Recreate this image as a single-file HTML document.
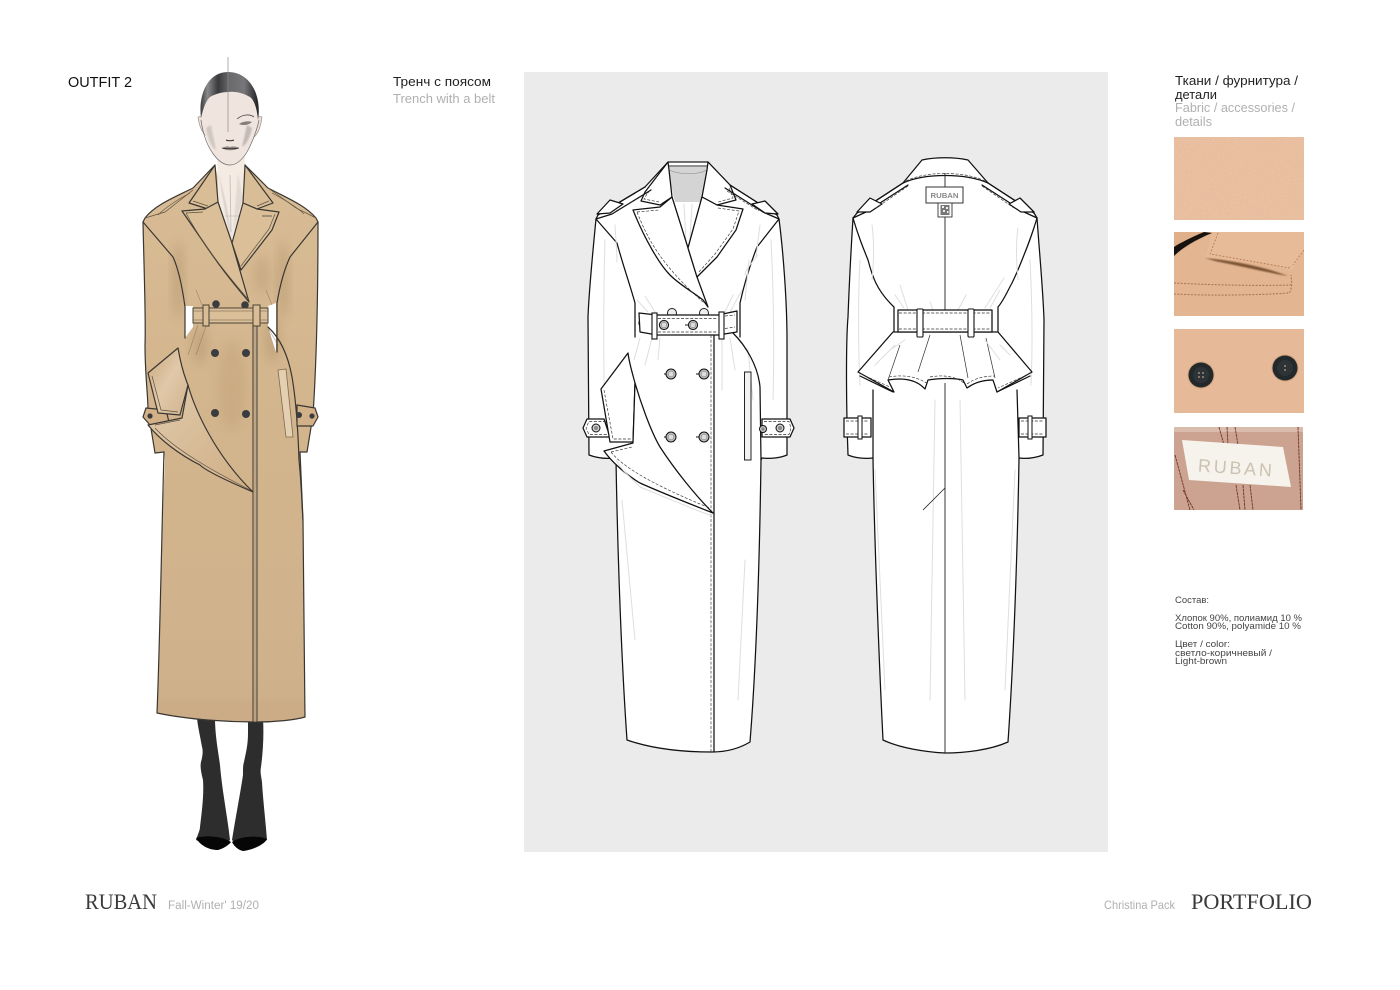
<!DOCTYPE html>
<html lang="ru"><head><meta charset="utf-8"><title>Outfit 2</title>
<style>
html,body{margin:0;padding:0;background:#fff;width:1400px;height:990px;overflow:hidden}
svg{display:block}
text{font-family:"Liberation Sans","Noto Sans CJK SC",sans-serif}
.serif{font-family:"Liberation Serif",serif}
.k{fill:none;stroke:#111;stroke-width:1.25;stroke-linejoin:round;stroke-linecap:round}
.w{fill:#fff}
.t{fill:none;stroke:#333;stroke-width:.65;stroke-dasharray:3 1.6}
.f{fill:none;stroke:#dedede;stroke-width:1;stroke-linecap:round}
.c{fill:none;stroke:#3a3732;stroke-width:1.2;stroke-linejoin:round;stroke-linecap:round}
.d{fill:none;stroke:#5e5140;stroke-width:.7}
</style></head><body>
<svg width="1400" height="990" viewBox="0 0 1400 990" xmlns="http://www.w3.org/2000/svg">
<defs>
<linearGradient id="coat" x1="0" y1="0" x2="0" y2="1"><stop offset="0" stop-color="#d8bc95"/><stop offset=".45" stop-color="#d3b58d"/><stop offset="1" stop-color="#ceb08b"/></linearGradient>
<linearGradient id="flap" x1="0" y1="0" x2="1" y2="1"><stop offset="0" stop-color="#c9a77d"/><stop offset=".5" stop-color="#e0c8a8"/><stop offset="1" stop-color="#d2b390"/></linearGradient>
<linearGradient id="flap2" x1="0" y1="0" x2="1" y2="1"><stop offset="0" stop-color="#e0caab"/><stop offset="1" stop-color="#cfae85"/></linearGradient>
<linearGradient id="hair" x1="0" y1="0" x2="1" y2="0"><stop offset="0" stop-color="#3a3a3c"/><stop offset=".12" stop-color="#8a8a8d"/><stop offset=".3" stop-color="#3a3a3c"/><stop offset=".5" stop-color="#6a6a6d"/><stop offset=".75" stop-color="#77777b"/><stop offset="1" stop-color="#1e1e20"/></linearGradient>
<filter id="b2" x="-30%" y="-30%" width="160%" height="160%"><feGaussianBlur stdDeviation="2"/></filter>
<filter id="b5" x="-50%" y="-50%" width="200%" height="200%"><feGaussianBlur stdDeviation="5"/></filter>
<filter id="b1" x="-30%" y="-30%" width="160%" height="160%"><feGaussianBlur stdDeviation=".8"/></filter>
<filter id="grain" x="0" y="0" width="100%" height="100%"><feTurbulence type="fractalNoise" baseFrequency=".7" numOctaves="2" seed="4"/><feColorMatrix values="0 0 0 0 .6  0 0 0 0 .4  0 0 0 0 .28  0 0 0 .6 -.2"/></filter>
<clipPath id="s2"><rect x="1174" y="232" width="130" height="84"/></clipPath>
<clipPath id="s4"><rect x="1174" y="427" width="129" height="83"/></clipPath>
<clipPath id="coatclip"><path d="M215,165 L193,188 C175,197 155,205 145,218 L143,222 C144,270 146,320 145,345 C145,375 148,395 148,410 L155,453 L164,452 L165,460 C162,520 160,640 157,713 C190,720 230,722 257,722 C275,722 295,720 305,717 C304,640 304,560 303,520 L300,452 L307,452 L313,415 C316,370 318,300 318,222 L316,218 C305,205 285,197 268,188 L245,165 L232,243 Z"/></clipPath>
</defs>
<rect width="1400" height="990" fill="#fff"/>
<rect x="524" y="72" width="584" height="780" fill="#ebebeb"/>

<!-- ILLUSTRATION: legs -->
<path d="M197,718 L215,718 C215,735 218,750 220,765 C222,790 228,820 230,840 L218,850 L196,840 C198,834 200,830 200,827 C202,810 204,795 203,780 C201,772 200,766 201,762 C203,755 203,750 202,747 C200,735 198,728 197,718 Z" fill="#2d2d2e"/>
<path d="M248,718 L263,718 C264,735 263,752 261,767 C260,772 261,775 262,782 C263,800 266,825 267,840 L243,851 L232,840 C236,815 240,795 243,775 C243,768 243,765 244,762 C246,752 248,745 248,733 Z" fill="#2d2d2e"/>
<path d="M196,838 C205,835 222,836 231,842 C228,846 222,849 218,850 C208,850 200,845 196,838 Z" fill="#060606"/>
<path d="M232,842 C240,836 258,835 267,839 C264,845 252,850 243,851 C238,850 234,846 232,842 Z" fill="#060606"/>

<!-- ILLUSTRATION: coat -->
<path d="M215,165 L193,188 C175,197 155,205 145,218 L143,222 C144,270 146,320 145,345 C145,375 148,395 148,410 L155,453 L164,452 L165,460 C162,520 160,640 157,713 C190,720 230,722 257,722 C275,722 295,720 305,717 C304,640 304,560 303,520 L300,452 L307,452 L313,415 C316,370 318,300 318,222 L316,218 C305,205 285,197 268,188 L245,165 L232,243 Z" fill="url(#coat)"/>
<g clip-path="url(#coatclip)">
<ellipse cx="178" cy="280" rx="5" ry="38" fill="#a5855f" opacity=".4" filter="url(#b5)"/>
<ellipse cx="283" cy="280" rx="5" ry="38" fill="#a5855f" opacity=".4" filter="url(#b5)"/>
<ellipse cx="232" cy="385" rx="14" ry="45" fill="#bd9a70" opacity=".35" filter="url(#b5)"/>
<ellipse cx="272" cy="340" rx="8" ry="22" fill="#a98a64" opacity=".35" filter="url(#b5)"/>
<ellipse cx="200" cy="345" rx="8" ry="20" fill="#a98a64" opacity=".35" filter="url(#b5)"/>
<rect x="0" y="700" width="400" height="30" fill="#b8996f" opacity=".15" filter="url(#b2)"/>
<ellipse cx="262" cy="275" rx="8" ry="18" fill="#a58760" opacity=".25" filter="url(#b5)"/>
</g>
<!-- gaps at waist -->
<path d="M185,306 L193,306 L193,327 L185,338 Z" fill="#fff"/>
<path d="M268,306 L276,303 L276,352 C272,340 270,333 268,327 Z" fill="#fff"/>

<!-- neck and head -->
<path d="M217,150 L245,150 L245,167 L243,203 L232,243 L218,202 Z" fill="#f4ebe3"/>
<path d="M218,170 L228,225 L232,240 L226,205 Z" fill="#9f9894" opacity=".45" filter="url(#b1)"/>
<path d="M238,172 L233,232 L243,200 Z" fill="#bbb1a7" opacity=".3" filter="url(#b1)"/>
<path d="M230,175 L231,232" stroke="#bbb" stroke-width=".8" fill="none"/>
<path d="M225,216 H240" stroke="#b8ae9f" stroke-width=".5"/>
<path d="M198,117 C199,126 203,135 208,137 L208,115 Z" fill="#ebddd5" stroke="#8a8380" stroke-width=".6"/>
<path d="M262,117 C261,126 258,134 254,137 L254,115 Z" fill="#ebddd5" stroke="#8a8380" stroke-width=".6"/>
<path d="M201,117 C203,130 208,145 214,155 C220,163 226,165 230,165 C236,165 242,160 247,152 C252,143 257,130 259,117 C259,100 250,85 240,80 L220,80 C208,85 203,100 201,117 Z" fill="#efe5de"/>
<path d="M206,128 C208,140 212,148 216,150 L211,125 Z" fill="#9b9491" opacity=".35" filter="url(#b1)"/>
<path d="M252,128 C250,138 246,145 242,147 L247,125 Z" fill="#99908c" opacity=".5" filter="url(#b1)"/>
<path d="M201,120 C203,135 208,147 214,155 C220,163 226,165 230,165 C236,165 242,160 247,152 C252,143 257,130 259,120" fill="none" stroke="#6f6a68" stroke-width=".7"/>
<path d="M201,118 C198,94 208,72 228,72 C250,72 262,95 258,120 C257,108 254,100 250,97 C243,93 235,91 228,92 C222,92 215,94 210,97 C205,102 203,110 201,118 Z" fill="url(#hair)"/>
<path d="M228,57 V132" stroke="#8a8a8a" stroke-width=".7"/>
<path d="M237,119 C243,114 250,114 254,117" fill="none" stroke="#4c4543" stroke-width=".8"/>
<path d="M239,124 C243,121 249,121 252,122 C249,125 243,126 239,124 Z" fill="#857d7b"/>
<path d="M226,140 C228,141 232,141 234,140" fill="none" stroke="#3a3331" stroke-width="1"/>
<path d="M222,148 C226,146 228,146 230,147 C233,146 235,146 239,148 C235,151 226,151 222,148 Z" fill="#938986"/>
<path d="M222,148 C226,149 234,149 239,148" fill="none" stroke="#2c2624" stroke-width=".7"/>

<!-- coat lines -->
<path d="M215,165 L193,188 C175,197 155,205 145,218 L143,222 C144,270 146,320 145,345 C145,375 148,395 148,410 L155,453 L164,452" class="c"/>
<path d="M164,452 C162,520 160,640 157,713 C190,720 230,722 257,722 C275,722 295,720 305,717 C304,640 304,560 303,520 L300,452" class="c"/>
<path d="M245,165 L268,188 C285,197 305,205 316,218 L318,222 C318,300 316,370 313,415 L307,452 L300,452" class="c"/>
<path d="M143,222 L173,257 C178,268 182,285 185,307 V338" class="c"/>
<path d="M318,222 L290,257 C284,270 280,285 277,303 V352" class="c"/>
<path d="M268,327 C280,338 288,355 292,377 C296,400 298,430 299,460 C302,490 302,510 303,520" class="c"/>
<path d="M193,190 L165,212 L145,218 M268,188 L296,208 L316,218" class="d"/>
<path d="M190,193 C175,201 165,208 158,215 M272,193 C285,200 297,207 304,214" class="d"/>
<!-- collar -->
<path d="M215,165 L189,203 L208,209 L218,202 L215,165 Z" style="fill:#d9bd96" class="c"/>
<path d="M245,165 L273,203 L257,209 L243,203 Z" style="fill:#d9bd96" class="c"/>
<path d="M193,201 L208,206" class="d"/>
<path d="M269,201 L257,206" class="d"/>
<!-- lapels -->
<path d="M182,211 L205,209 L218,202 L232,243 L249,302 C235,285 222,270 202,240 Z" style="fill:#dabf99" class="c"/>
<path d="M186,213 L203,212 M186,213 C195,230 210,255 247,298" class="d"/>
<path d="M243,203 L257,209 L279,212 L272,230 L241,270 L232,243 Z" style="fill:#dabf99" class="c"/>
<path d="M275,214 L269,229 L241,266" class="d"/>
<path d="M262,216 H272" stroke="#333" stroke-width=".7"/>
<!-- center -->
<path d="M253,323 V722 M257,323 V722" stroke="#4a4540" stroke-width="1.1" fill="none"/>
<path d="M255,323 V722" stroke="#a89679" stroke-width="1"/>
<!-- gathers -->
<path d="M198,325 L188,355 M206,326 L196,355 M268,328 L278,345 M272,305 L266,290 M202,305 L196,290" stroke="#7a6548" stroke-width=".6" opacity=".6" fill="none"/>
<!-- buttons -->
<g fill="#3a3c40">
<circle cx="216" cy="304" r="3.8"/><circle cx="245" cy="305" r="3.8"/>
<circle cx="215" cy="353" r="4"/><circle cx="246" cy="353" r="4"/>
<circle cx="215" cy="413" r="4"/><circle cx="246" cy="414" r="4"/>
</g>
<!-- belt -->
<rect x="193" y="308" width="75" height="15" fill="#dabf99" stroke="#4a4337" stroke-width="1"/>
<path d="M193,311 H268 M193,320 H268" stroke="#6b5d48" stroke-width=".5"/>
<rect x="203" y="305" width="6" height="21" fill="#d9bd95" stroke="#4a4337" stroke-width="1"/>
<rect x="253" y="305" width="7" height="21" fill="#d9bd95" stroke="#4a4337" stroke-width="1"/>
<!-- cuffs -->
<path d="M143,417 L146,408 L166,410 L170,426 L150,425 Z" style="fill:#d2b188" class="c"/>
<circle cx="150" cy="416" r="2.6" fill="#3a3c40"/>
<path d="M318,417 L315,408 L297,405 L297,426 L313,426 Z" style="fill:#d2b188" class="c"/>
<circle cx="299" cy="415" r="3" fill="#3a3c40"/><circle cx="312" cy="416" r="2.6" fill="#3a3c40"/>
<!-- pocket -->
<path d="M278,370 L286,369 L293,437 L286,437 Z" fill="#e4cfb0" stroke="#7b6b53" stroke-width=".8"/>
<!-- flap -->
<path d="M178,348 L148,373 L158,413 L180,415 L188,385 C183,373 180,360 178,348 Z" style="fill:url(#flap)" class="c"/>
<path d="M152,376 L161,410 L178,412" class="d"/>
<path d="M188,385 C195,410 215,455 253,492 C225,480 205,470 200,465 C180,455 160,440 148,425 L182,418 Z" style="fill:url(#flap2)" class="c"/>
<path d="M155,425 L180,420 M155,428 C175,450 215,472 250,490" class="d"/>

<!-- FRONT SKETCH -->
<path d="M668,162 L645,187 L598,215 L596,219 C592,260 589,290 588,317 L589,455 C597,458 606,459 615,458 L616,460 C617,520 620,640 627,740 C650,748 680,752 712,752 C727,752 740,748 750,742 C755,680 759,600 761,460 L762,458 C770,459 780,458 787,455 L787,340 C787,300 783,250 779,219 L777,215 L730,185 L708,162 Z" class="k w"/>
<!-- neck -->
<path d="M669,167 H707 C707,178 704,190 702,202 H675 C672,190 669,178 669,167 Z" fill="#d4d4d4"/>
<path d="M668,162 H708 M668,166 H708" stroke="#222" stroke-width=".9"/>
<path d="M669,170 C680,175 698,175 707,170" stroke="#888" fill="none" stroke-width=".6"/>
<path d="M684,204 L686,240 M692,204 L690,240" class="f"/>
<path d="M672,197 L688,248 L702,197" class="k"/>
<!-- collar -->
<path d="M668,162 L645,192 L641,201 L660,205 L672,197 L669,170 Z" class="k w"/>
<path d="M708,162 L730,185 L736,200 L717,205 L702,197 L707,170 Z" class="k w"/>
<path d="M647,194 L644,199 L659,202 M729,188 L733,198 L718,202" class="t"/>
<!-- lapels -->
<path d="M633,210 L660,207 L672,197 L688,248 L697,277 L708,307 L703,300 C690,290 680,285 670,275 C660,265 645,240 633,210 Z" class="k w"/>
<path d="M637,212 L659,210 M637,212 C650,245 665,268 704,303" class="t"/>
<path d="M702,197 L717,205 L743,209 L736,230 L717,257 L697,277 L688,248 Z" class="k w"/>
<path d="M718,208 L739,211 L733,229 L715,254 L698,273" class="t"/>
<!-- shoulders -->
<path d="M645,187 L598,215 M651,190 L612,214 L596,219" class="k"/>
<path d="M610,200 L597,214 L610,213 L623,204 Z" class="k w"/>
<path d="M649,192 L616,211" class="t"/>
<path d="M730,185 L777,215 M725,188 L763,212 L779,219" class="k"/>
<path d="M765,201 L778,214 L765,213 L752,204 Z" class="k w"/>
<path d="M727,191 L759,211" class="t"/>
<!-- armholes -->
<path d="M596,219 L617,243 C622,262 630,285 635,303 V337" class="k"/>
<path d="M779,219 L757,247 C750,265 744,285 740,303 V337" class="k"/>
<path d="M615,225 C616,240 617,255 617,262 M760,225 C758,240 757,250 756,258 M605,240 C603,300 604,360 604,390 M771,240 C774,300 774,360 773,400 M749,260 L745,300 M758,255 C750,265 745,270 745,275" class="f"/>
<path d="M637,300 L648,312 M645,296 L655,312 M733,295 L725,312 M742,290 L730,312 M640,338 L634,360 M652,338 L645,365 M660,338 L658,360 M730,338 L735,370 M722,338 L722,390 M748,350 L753,400 M622,500 L635,640 M745,560 L738,700" class="f"/>
<!-- waist body -->
<path d="M733,333 C745,345 758,365 760,387 L761,460" class="k"/>
<path d="M714,335 V752" class="k"/>
<path d="M711,335 V752" class="t" stroke-width=".9"/>
<!-- buttons behind -->
<g fill="#eee" stroke="#222" stroke-width="1">
<circle cx="672" cy="313" r="4.5"/><circle cx="704" cy="313" r="4.5"/><circle cx="642" cy="323" r="3.2"/>
</g>
<!-- belt -->
<path d="M639,313 L657,315 H718 L737,311 V332 L718,335 H657 L640,332 Z" class="k w"/>
<path d="M658,318.5 H717 M658,332 H717 M725,316 L735,315 M725,328.5 L735,327" class="t"/>
<rect x="652" y="313" width="5" height="26" fill="#fff" stroke="#111" stroke-width="1.1"/>
<rect x="719" y="312" width="5" height="27" fill="#fff" stroke="#111" stroke-width="1.1"/>
<!-- buttons -->
<g>
<circle cx="664" cy="325" r="4.6" fill="#bbb" stroke="#111" stroke-width="1"/><circle cx="664" cy="325" r="2.6" fill="#ddd" stroke="#777" stroke-width=".5"/>
<circle cx="693" cy="325" r="4.6" fill="#bbb" stroke="#111" stroke-width="1"/><circle cx="693" cy="325" r="2.6" fill="#ddd" stroke="#777" stroke-width=".5"/>
<path d="M685,325 H688" stroke="#111"/>
<circle cx="671" cy="374" r="5" fill="#bbb" stroke="#111" stroke-width="1"/><circle cx="671" cy="374" r="2.8" fill="#ddd" stroke="#777" stroke-width=".5"/>
<circle cx="704" cy="374" r="5" fill="#bbb" stroke="#111" stroke-width="1"/><circle cx="704" cy="374" r="2.8" fill="#ddd" stroke="#777" stroke-width=".5"/>
<circle cx="671" cy="437" r="5" fill="#bbb" stroke="#111" stroke-width="1"/><circle cx="671" cy="437" r="2.8" fill="#ddd" stroke="#777" stroke-width=".5"/>
<circle cx="704" cy="437" r="5" fill="#bbb" stroke="#111" stroke-width="1"/><circle cx="704" cy="437" r="2.8" fill="#ddd" stroke="#777" stroke-width=".5"/>
<path d="M664,374 H666 M696,374 H699 M664,437 H666 M696,437 H699" stroke="#111"/>
</g>
<!-- pocket -->
<rect x="744.5" y="372" width="6.5" height="88" fill="#f2f2f2" stroke="#222" stroke-width="1"/>
<!-- cuffs -->
<path d="M604,419 L587,419 L583,428 L587,437 L610,437 Z" class="k w"/>
<path d="M606,421.5 L589,421.5 L586,428 L589,434.5 L608,434.5" class="t"/>
<circle cx="596" cy="428" r="4" fill="#ccc" stroke="#111"/><circle cx="596" cy="428" r="2" fill="#888"/>
<path d="M762,419 H790 L794,428 L790,437 H762 Z" class="k w"/>
<path d="M764,421.5 H789 L791,428 L789,434.5 H764" class="t"/>
<circle cx="763" cy="429" r="3.5" fill="#ccc" stroke="#111"/><circle cx="763" cy="429" r="1.7" fill="#888"/>
<circle cx="780" cy="428" r="4" fill="#ccc" stroke="#111"/><circle cx="780" cy="428" r="2" fill="#888"/>
<!-- flap -->
<path d="M628,353 L601,389 L610,442 L633,442 L635,383 C632,372 629,362 628,353 Z" class="k w"/>
<path d="M604,390 L613,439 L632,439" class="t"/>
<path d="M635,383 C640,400 650,430 660,447 C675,470 695,495 713,513 C685,502 660,492 640,483 C625,474 612,462 604,451 L633,443 Z" class="k w"/>
<path d="M611,452 L632,447 M611,452 C625,470 665,490 710,508" class="t"/>
<path d="M616,460 C625,475 632,478 640,487 C665,497 690,508 712,516" fill="none" stroke="#ddd" stroke-width="1"/>

<!-- BACK SKETCH -->
<path d="M903,183 L922,160 C935,157 955,157 968,160 L988,183 L1034,213 L1037,218 C1040,260 1043,290 1044,320 L1043,455 C1035,458 1027,459 1019,458 C1018,520 1015,640 1008,742 C990,750 965,753 945,753 C925,752 900,748 883,740 C878,640 874,520 873,458 C865,459 855,458 848,455 C846,400 846,340 848,317 C849,290 851,250 853,218 L857,213 Z" class="k w"/>
<path d="M903,183 C925,173 965,173 988,183" class="k" stroke-width="1"/>
<path d="M906,181 C925,171 965,171 985,181" class="t"/>
<path d="M945,173 V310 M945,383 V753" stroke="#222" stroke-width=".9" fill="none"/>
<rect x="926" y="187" width="37" height="16" fill="#fff" stroke="#333" stroke-width="1"/>
<text x="944.5" y="198" font-size="7.5" fill="#8a8a8a" text-anchor="middle" font-weight="bold" textLength="28" lengthAdjust="spacingAndGlyphs">RUBAN</text>
<rect x="938" y="203" width="14" height="14" fill="#fff" stroke="#333" stroke-width=".9"/>
<rect x="940.5" y="205" width="9" height="10" fill="#777"/>
<path d="M942,206 h2 v2 h-2z M946,207 h2 v2 h-2z M943,210 h2 v2 h-2z M947,211 h1.5 v2 h-1.5z" fill="#eee"/>
<!-- shoulders -->
<path d="M903,183 L857,213 M908,185 L866,212 L853,218" class="k"/>
<path d="M870,198 L857,212 L870,212 L882,204 Z" class="k w"/>
<path d="M908,186 L876,208" class="t"/>
<path d="M988,183 L1034,213 M982,185 L1024,212 L1037,218" class="k"/>
<path d="M1020,198 L1034,212 L1021,212 L1009,204 Z" class="k w"/>
<path d="M982,186 L1014,208" class="t"/>
<!-- armholes -->
<path d="M853,218 C858,235 862,245 868,260 C872,275 876,290 894,307 V332" class="k"/>
<path d="M1037,218 C1032,235 1028,245 1022,260 C1018,270 1016,275 1012,283 C1008,290 1004,300 998,307 V332" class="k"/>
<path d="M872,225 C874,240 874,260 872,280 M1018,228 C1016,240 1016,260 1018,280 M860,260 C858,300 858,340 860,385 M1030,260 C1032,300 1033,340 1031,385 M900,285 L908,310 M895,295 L904,308 M1004,278 L985,308 M1000,290 L990,308 M930,302 L933,310 M966,295 L958,310 M875,470 L885,690 M1015,470 L1005,690 M935,400 L930,700 M960,400 L965,700" class="f"/>
<!-- peplum -->
<path d="M893,332 L858,372 L894,392 L888,380 C900,378 915,378 925,389 L928,380 C940,378 955,378 963,380 L967,388 C975,382 985,380 993,380 L997,392 L1032,372 L998,332 Z" class="k w"/>
<path d="M861,374 L890,387 M1029,374 L998,388 M889,377 C900,375 915,375 928,384 M930,377 C940,375 955,375 965,384 M967,384 C975,378 985,376 995,376" class="t"/>
<path d="M860,376 L893,392 M1030,376 L997,392" class="k"/>
<path d="M900,345 L888,380 M930,335 L918,372 M960,335 L968,378 M986,338 L995,378" stroke="#333" stroke-width=".7" fill="none"/>
<path d="M905,340 L890,350 M1000,360 L985,340 M895,345 L875,365 M1010,355 L1000,345" class="f"/>
<path d="M873,390 V458 M1017,390 L1019,458" class="k"/>
<!-- belt -->
<rect x="898" y="310" width="94" height="22" class="k w"/>
<path d="M899,313 H991 M899,329 H991" class="t"/>
<rect x="917" y="309" width="6" height="28" rx="1" fill="#fff" stroke="#111" stroke-width="1.1"/>
<rect x="968" y="309" width="6" height="28" rx="1" fill="#fff" stroke="#111" stroke-width="1.1"/>
<path d="M923,510 L945,488" stroke="#222" stroke-width=".8"/>
<!-- back cuffs -->
<rect x="844" y="418" width="27" height="19" class="k w"/>
<path d="M846,421 H869 M846,434 H869" class="t"/>
<rect x="858" y="416" width="4" height="23" fill="#fff" stroke="#111"/>
<rect x="1019" y="418" width="27" height="19" class="k w"/>
<path d="M1021,421 H1044 M1021,434 H1044" class="t"/>
<rect x="1028" y="416" width="4" height="23" fill="#fff" stroke="#111"/>

<!-- SWATCHES -->
<rect x="1174" y="137" width="130" height="83" fill="#ecc1a2"/>
<rect x="1174" y="137" width="130" height="83" filter="url(#grain)"/>

<g clip-path="url(#s2)">
<rect x="1174" y="232" width="130" height="84" fill="#e3b590"/>
<path d="M1212,232 H1304 V250 L1292,270 C1270,263 1235,260 1206,258 Z" fill="#e8bb98"/>
<path d="M1174,258 C1182,250 1195,242 1212,233 L1206,232 H1174 Z" fill="#e0b08a"/>
<path d="M1174,256 C1182,248 1195,240 1212,233 L1204,232 C1192,237 1180,243 1174,247 Z" fill="#18120e"/>
<path d="M1205,258 C1235,261 1265,267 1288,276 C1270,273 1240,266 1215,261 Z" fill="#7a5233" filter="url(#b1)"/>
<path d="M1218,233 L1210,254 L1290,268 M1304,250 L1293,265" fill="none" stroke="#b37f57" stroke-width=".9" stroke-dasharray="2 1.5"/>
<path d="M1174,283 C1210,285 1260,286 1291,285 M1174,294 C1210,296 1260,295 1289,293 C1292,290 1292,283 1291,275" fill="none" stroke="#a57250" stroke-width="1" stroke-dasharray="2 1.4"/>
</g>

<rect x="1174" y="329" width="130" height="84" fill="#e6ba99"/>
<circle cx="1201" cy="375" r="13.5" fill="#cda07e"/>
<circle cx="1201" cy="375" r="12.5" fill="#23282b"/>
<circle cx="1201" cy="375" r="8" fill="#2d3336"/>
<circle cx="1199" cy="373" r=".9" fill="#b9a88a"/><circle cx="1203" cy="373" r=".9" fill="#b9a88a"/><circle cx="1199" cy="377" r=".9" fill="#b9a88a"/><circle cx="1203" cy="377" r=".9" fill="#b9a88a"/>
<circle cx="1285" cy="368" r="13.5" fill="#cda07e"/>
<circle cx="1285" cy="368" r="12.5" fill="#23282b"/>
<circle cx="1285" cy="368" r="8" fill="#2d3336"/>
<circle cx="1285" cy="366" r=".9" fill="#b9a88a"/><circle cx="1285" cy="370" r=".9" fill="#b9a88a"/>

<g clip-path="url(#s4)">
<rect x="1174" y="427" width="129" height="83" fill="#cba390"/>
<rect x="1174" y="427" width="129" height="5" fill="#d9bcab"/>
<path d="M1219,427 L1224,445 M1227,427 L1228,445 M1235,427 L1238,445 M1298,427 L1301,510 M1175,455 L1190,510 M1183,490 L1194,510 M1236,485 L1240,510 M1243,485 L1245,510 M1250,485 L1253,510" stroke="#70352b" stroke-width=".9" fill="none" stroke-dasharray="3 .6"/>
<path d="M1182,440 L1283,447 L1291,487 L1189,480 Z" fill="#f6f3ec"/>
<text x="1235" y="474" font-size="18" fill="#cbc2b2" text-anchor="middle" textLength="74" lengthAdjust="spacing" transform="rotate(4 1235 468)">RUBAN</text>
</g>

<!-- TEXT -->
<text x="68" y="87" font-size="14.6" fill="#111" textLength="64" lengthAdjust="spacingAndGlyphs">OUTFIT 2</text>
<text x="393" y="86" font-size="13" fill="#222" textLength="98" lengthAdjust="spacingAndGlyphs">Тренч с поясом</text>
<text x="393" y="103" font-size="13" fill="#b0b0b0" textLength="102" lengthAdjust="spacingAndGlyphs">Trench with a belt</text>
<text x="1175" y="85" font-size="13" fill="#222" textLength="123" lengthAdjust="spacingAndGlyphs">Ткани / фурнитура /</text>
<text x="1175" y="99" font-size="13" fill="#222" textLength="42" lengthAdjust="spacingAndGlyphs">детали</text>
<text x="1175" y="112" font-size="13" fill="#b0b0b0" textLength="120" lengthAdjust="spacingAndGlyphs">Fabric / accessories /</text>
<text x="1175" y="126" font-size="13" fill="#b0b0b0" textLength="37" lengthAdjust="spacingAndGlyphs">details</text>
<text x="1175" y="603" font-size="9.5" fill="#444" textLength="34" lengthAdjust="spacingAndGlyphs">Состав:</text>
<text x="1175" y="621" font-size="9.5" fill="#444" textLength="127" lengthAdjust="spacingAndGlyphs">Хлопок 90%, полиамид 10 %</text>
<text x="1175" y="629" font-size="9.5" fill="#444" textLength="126" lengthAdjust="spacingAndGlyphs">Cotton 90%, polyamide 10 %</text>
<text x="1175" y="647" font-size="9.5" fill="#444" textLength="55" lengthAdjust="spacingAndGlyphs">Цвет / color:</text>
<text x="1175" y="656" font-size="9.5" fill="#444" textLength="97" lengthAdjust="spacingAndGlyphs">светло-коричневый  /</text>
<text x="1175" y="664" font-size="9.5" fill="#444" textLength="52" lengthAdjust="spacingAndGlyphs">Light-brown</text>

<text class="serif" x="85" y="909" font-size="22" fill="#3a3a3a" textLength="72" lengthAdjust="spacingAndGlyphs">RUBAN</text>
<text x="168" y="909" font-size="11.5" fill="#b0b0b0" textLength="91" lengthAdjust="spacingAndGlyphs">Fall-Winter' 19/20</text>
<text x="1104" y="909" font-size="12" fill="#b0b0b0" textLength="71" lengthAdjust="spacingAndGlyphs">Christina Pack</text>
<text class="serif" x="1191" y="909" font-size="22" fill="#3a3a3a" textLength="121" lengthAdjust="spacingAndGlyphs">PORTFOLIO</text>
</svg>
</body></html>
